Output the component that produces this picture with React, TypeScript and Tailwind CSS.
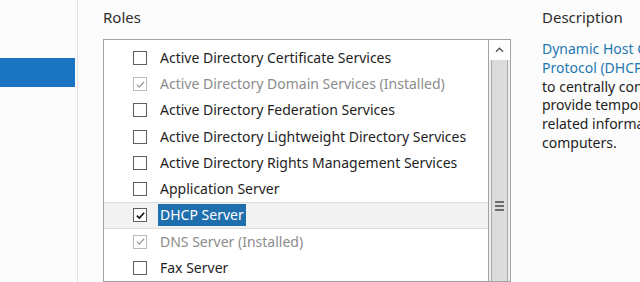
import React from 'react';

const roles = [
  { label: 'Active Directory Certificate Services', state: 'off' },
  { label: 'Active Directory Domain Services (Installed)', state: 'installed' },
  { label: 'Active Directory Federation Services', state: 'off' },
  { label: 'Active Directory Lightweight Directory Services', state: 'off' },
  { label: 'Active Directory Rights Management Services', state: 'off' },
  { label: 'Application Server', state: 'off' },
  { label: 'DHCP Server', state: 'selected' },
  { label: 'DNS Server (Installed)', state: 'installed' },
  { label: 'Fax Server', state: 'off' },
];

function Check({ state }: { state: string }) {
  const checked = state !== 'off';
  const grey = state === 'installed';
  return (
    <span
      className={`flex h-[14px] w-[14px] shrink-0 items-center justify-center border bg-white ${
        grey ? 'border-[#b9b9b9]' : 'border-[#5f5f5f]'
      }`}
    >
      {checked && (
        <svg viewBox="0 0 12 12" className="h-[11px] w-[11px]">
          <path
            d="M2 6.2 L4.7 8.8 L10 3"
            fill="none"
            stroke={grey ? '#9a9a9a' : '#111'}
            strokeWidth={grey ? 1.3 : 1.8}
          />
        </svg>
      )}
    </span>
  );
}

export default function App() {
  return (
    <div
      className="flex h-[282px] w-[640px] overflow-hidden bg-[#fcfcfc] text-[14px] text-[#1e1e1e]"
      style={{ fontFamily: '"Noto Sans", "Open Sans", sans-serif' }}
    >
      <div className="w-[78px] shrink-0 border-r border-[#e2e2e2] pt-[58px]">
        <div className="h-[29px] w-[75px] bg-[#1a74c2]" />
      </div>

      <div className="ml-[25px] flex w-[408px] shrink-0 flex-col">
        <div className="h-[39px] pt-[6px] text-[15px] text-[#2e2e2e]">Roles</div>
        <div className="flex flex-1 border border-[#a3a3a3] bg-white">
          <div className="flex-1 pt-[5px]">
            {roles.map((r) => (
              <div
                key={r.label}
                className={`flex h-[26.25px] items-center pl-[29px] ${
                  r.state === 'selected' ? 'border-y border-[#dcdcdc] bg-[#f2f2f2]' : ''
                }`}
              >
                <Check state={r.state} />
                <span
                  className={`ml-[11px] whitespace-nowrap px-[2px] leading-[22px] ${
                    r.state === 'installed'
                      ? 'text-[#8c8c8c]'
                      : r.state === 'selected'
                        ? 'bg-[#1f6fae] text-white'
                        : ''
                  }`}
                >
                  {r.label}
                </span>
              </div>
            ))}
          </div>
          <div className="flex w-[22px] flex-col border-l border-[#a3a3a3] bg-[#f0f0f0]">
            <div className="flex h-[20px] items-center justify-center bg-white">
              <svg viewBox="0 0 10 6" className="h-[6px] w-[9px]">
                <path d="M1 5 L5 1 L9 5" fill="none" stroke="#555" strokeWidth="1.4" />
              </svg>
            </div>
            <div className="mx-[2px] flex flex-1 flex-col items-center border-x border-[#a8a8a8] bg-[#dcdcdc] pt-[141px]">
              <div className="flex flex-col gap-[2px]">
                <div className="h-[2px] w-[9px] bg-[#6d6d6d]" />
                <div className="h-[2px] w-[9px] bg-[#6d6d6d]" />
                <div className="h-[2px] w-[9px] bg-[#6d6d6d]" />
              </div>
            </div>
          </div>
        </div>
      </div>

      <div className="ml-[31px] shrink-0 whitespace-nowrap">
        <div className="h-[40px] pt-[6px] text-[15px] text-[#2e2e2e]">Description</div>
        <div className="leading-[18.8px]">
          <div className="text-[#1f78b0]">Dynamic Host Configuration</div>
          <div>
            <span className="text-[#1f78b0]">Protocol (DHCP) Server</span> enables you
          </div>
          <div>to centrally configure, manage, and</div>
          <div>provide temporary IP addresses and</div>
          <div>related information for client</div>
          <div>computers.</div>
        </div>
      </div>
    </div>
  );
}
